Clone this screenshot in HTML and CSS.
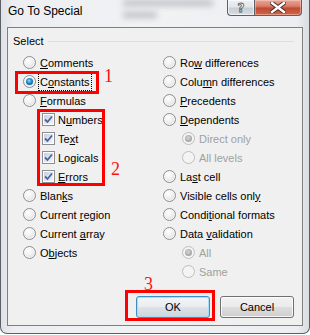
FILE: index.html
```html
<!DOCTYPE html>
<html>
<head>
<meta charset="utf-8">
<link rel="stylesheet" href="styles.css">
</head>
<body>
<div class="win">
  <div class="glass"><div class="blur b1"></div><div class="blur b2"></div><div class="blur b3"></div></div>
  <div class="titlebar">
    <span class="title">Go To Special</span>
    <div class="caps">
      <div class="cap help"><span>?</span></div>
      <div class="cap close">
        <svg width="16" height="11" viewBox="0 0 16 11"><path d="M2 1 L14 10 M14 1 L2 10" stroke="#4a2a24" stroke-width="4.2" stroke-linecap="square"/><path d="M2 1 L14 10 M14 1 L2 10" stroke="#fff" stroke-width="2.4" stroke-linecap="square"/></svg>
      </div>
    </div>
  </div>
  <div class="client">
    <div class="group-head"><span>Select</span><div class="rule"></div></div>
    <div class="cols">
      <div class="col left">
        <div class="row"><span class="radio"></span><span><u>C</u>omments</span></div>
        <div class="row"><span class="radio on"></span><span class="focus">C<u>o</u>nstants</span></div>
        <div class="row"><span class="radio"></span><span><u>F</u>ormulas</span></div>
        <div class="row sub"><span class="check"><svg width="9" height="9" viewBox="0 0 9 9"><path d="M1 4.5 L3.5 7 L8 1.5" fill="none" stroke="#4a62a6" stroke-width="1.8"/></svg></span><span>N<u>u</u>mbers</span></div>
        <div class="row sub"><span class="check"><svg width="9" height="9" viewBox="0 0 9 9"><path d="M1 4.5 L3.5 7 L8 1.5" fill="none" stroke="#4a62a6" stroke-width="1.8"/></svg></span><span>Te<u>x</u>t</span></div>
        <div class="row sub"><span class="check"><svg width="9" height="9" viewBox="0 0 9 9"><path d="M1 4.5 L3.5 7 L8 1.5" fill="none" stroke="#4a62a6" stroke-width="1.8"/></svg></span><span>Lo<u>g</u>icals</span></div>
        <div class="row sub"><span class="check"><svg width="9" height="9" viewBox="0 0 9 9"><path d="M1 4.5 L3.5 7 L8 1.5" fill="none" stroke="#4a62a6" stroke-width="1.8"/></svg></span><span><u>E</u>rrors</span></div>
        <div class="row"><span class="radio"></span><span>Blan<u>k</u>s</span></div>
        <div class="row"><span class="radio"></span><span>Current <u>r</u>egion</span></div>
        <div class="row"><span class="radio"></span><span>Current <u>a</u>rray</span></div>
        <div class="row"><span class="radio"></span><span>O<u>b</u>jects</span></div>
      </div>
      <div class="col right">
        <div class="row"><span class="radio"></span><span>Ro<u>w</u> differences</span></div>
        <div class="row"><span class="radio"></span><span>Colu<u>m</u>n differences</span></div>
        <div class="row"><span class="radio"></span><span><u>P</u>recedents</span></div>
        <div class="row"><span class="radio"></span><span><u>D</u>ependents</span></div>
        <div class="row sub dis"><span class="radio on"></span><span>Direct only</span></div>
        <div class="row sub dis"><span class="radio"></span><span>All levels</span></div>
        <div class="row"><span class="radio"></span><span>La<u>s</u>t cell</span></div>
        <div class="row"><span class="radio"></span><span>Visible cells onl<u>y</u></span></div>
        <div class="row"><span class="radio"></span><span>Condi<u>t</u>ional formats</span></div>
        <div class="row"><span class="radio"></span><span>Data <u>v</u>alidation</span></div>
        <div class="row sub dis"><span class="radio on"></span><span>All</span></div>
        <div class="row sub dis"><span class="radio"></span><span>Same</span></div>
      </div>
    </div>
    <div class="buttons">
      <div class="btn default">OK</div>
      <div class="btn">Cancel</div>
    </div>
  </div>
  <div class="mark box1"></div>
  <div class="mark box2"></div>
  <div class="mark box3"></div>
  <span class="num n1">1</span>
  <span class="num n2">2</span>
  <span class="num n3">3</span>
</div>
</body>
</html>
```
FILE: styles.css
```css
html, body {
  margin: 0;
  padding: 0;
  background: #ffffff;
}
.win {
  position: relative;
  box-sizing: border-box;
  width: 310px;
  height: 334px;
  padding: 0 6px 7px 6px;
  border: 1px solid #5c6066;
  border-top: none;
  border-radius: 0 0 7px 7px;
  background: linear-gradient(90deg, #dfe2e6 0, #eceef1 4%, #f1f2f4 50%, #eceef1 96%, #d9dce0 100%);
  font-family: "Liberation Sans", Arial, sans-serif;
  font-size: 11px;
  color: #000;
  overflow: hidden;
}
.glass {
  position: absolute;
  left: 0;
  top: 0;
  width: 100%;
  height: 26px;
  pointer-events: none;
}
.blur {
  position: absolute;
  height: 6px;
  background: #a8abb0;
  filter: blur(3px);
  opacity: 0.7;
}
.b1 { left: 122px; top: 0; width: 90px; }
.b2 { left: 122px; top: 12px; width: 34px; }
.b3 { left: 250px; top: 0; width: 40px; opacity: 0.35; }
.titlebar {
  position: relative;
  height: 27px;
  display: flex;
  justify-content: space-between;
  align-items: flex-start;
  margin: 0 -6px 0 -6px;
}
.title {
  padding: 3px 0 0 7px;
  font-size: 12px;
  line-height: 17px;
  color: #000;
}
.caps {
  display: flex;
  margin-right: 7px;
}
.cap {
  box-sizing: border-box;
  height: 16px;
  border: 1px solid #5d5f64;
  border-top: none;
  display: flex;
  align-items: center;
  justify-content: center;
}
.help {
  width: 27px;
  border-right: none;
  border-radius: 0 0 0 4px;
  background: linear-gradient(180deg, #eef0f3 0, #e3e6ea 45%, #c9ced6 55%, #d8dde4 100%);
  box-shadow: inset 0 0 0 1px rgba(255,255,255,0.6);
}
.help span {
  font-family: "DejaVu Sans", sans-serif;
  font-weight: bold;
  font-size: 12px;
  line-height: 14px;
  color: #fff;
  -webkit-text-stroke: 0.8px #55585e;
}
.close {
  width: 48px;
  border-radius: 0 0 4px 0;
  background: linear-gradient(180deg, #e7a596 0, #d9806c 40%, #c24a33 55%, #d0654a 100%);
  box-shadow: inset 0 0 0 1px rgba(255,220,210,0.45);
}
.close svg { display: block; }
.client {
  box-sizing: border-box;
  height: 299px;
  border: 1px solid #7f7f7f;
  background: #f0f0f0;
}
.group-head {
  display: flex;
  align-items: center;
  height: 14px;
  margin: 6px 8px 0 5px;
}
.rule {
  flex: 1;
  margin-left: 4px;
  border-top: 1px solid #d5dfe5;
}
.cols {
  display: grid;
  grid-template-columns: 155px 1fr;
  margin-top: 5px;
}
.col.left { padding-left: 15px; }
.row {
  height: 19px;
  display: flex;
  align-items: center;
  white-space: nowrap;
}
.row.sub { padding-left: 19px; }
.row.dis { color: #a0a0a0; }
.radio {
  position: relative;
  box-sizing: border-box;
  flex: none;
  width: 13px;
  height: 13px;
  margin-right: 4px;
  border-radius: 50%;
  border: 1px solid #8c8e90;
  background: radial-gradient(circle at 40% 35%, #ffffff 0, #f1f1f1 40%, #d2d3d5 100%);
  box-shadow: inset 0 0 0 1px rgba(255,255,255,0.7);
}
.radio.on::after {
  content: "";
  position: absolute;
  left: 2px;
  top: 2px;
  width: 7px;
  height: 7px;
  border-radius: 50%;
  background: radial-gradient(circle at 45% 40%, #9de3fb 0, #2b97d6 35%, #0d4c86 85%);
}
.dis .radio {
  border-color: #bcbdbe;
  background: #f4f4f4;
  box-shadow: none;
}
.dis .radio.on::after {
  background: radial-gradient(circle at 45% 40%, #d8d8d8 0, #a9a9a9 60%, #999 100%);
}
.check {
  box-sizing: border-box;
  flex: none;
  width: 13px;
  height: 13px;
  margin-right: 3px;
  border: 1px solid #8c8e90;
  padding: 1px;
  background: #fff;
  display: flex;
}
.check svg {
  display: block;
  width: 9px;
  height: 9px;
  background: linear-gradient(135deg, #c9cedb 0, #e4e7ef 60%, #f4f5f8 100%);
}
.focus {
  outline: 1px dotted #000;
  outline-offset: 1px;
  line-height: 14px;
}
.buttons {
  display: flex;
  justify-content: flex-end;
  gap: 10px;
  margin-top: 15px;
  padding-right: 8px;
}
.btn {
  box-sizing: border-box;
  width: 74px;
  height: 22px;
  border: 1px solid #707070;
  border-radius: 3px;
  background: linear-gradient(180deg, #f2f2f2 0, #ebebeb 50%, #dddddd 51%, #cfcfcf 100%);
  box-shadow: inset 0 0 0 1px rgba(255,255,255,0.8);
  display: flex;
  align-items: center;
  justify-content: center;
  font-size: 11px;
}
.btn.default {
  border-color: #3c8fc4;
  box-shadow: inset 0 0 0 1px #a8def5;
  background: linear-gradient(180deg, #f3f5f7 0, #e9edf0 50%, #dce2e6 51%, #d0d7dc 100%);
}
.mark {
  position: absolute;
  box-sizing: border-box;
  border: 3px solid #ff0000;
}
.box1 { left: 14px; top: 71px; width: 84px; height: 23px; }
.box2 { left: 36px; top: 109px; width: 68px; height: 77px; }
.box3 { left: 124px; top: 290px; width: 90px; height: 31px; }
.num {
  position: absolute;
  font-family: "Liberation Serif", "Times New Roman", serif;
  font-size: 18px;
  line-height: 18px;
  color: #ff1010;
}
.n1 { left: 103px; top: 67px; }
.n2 { left: 110px; top: 160px; }
.n3 { left: 143px; top: 275px; }
```
